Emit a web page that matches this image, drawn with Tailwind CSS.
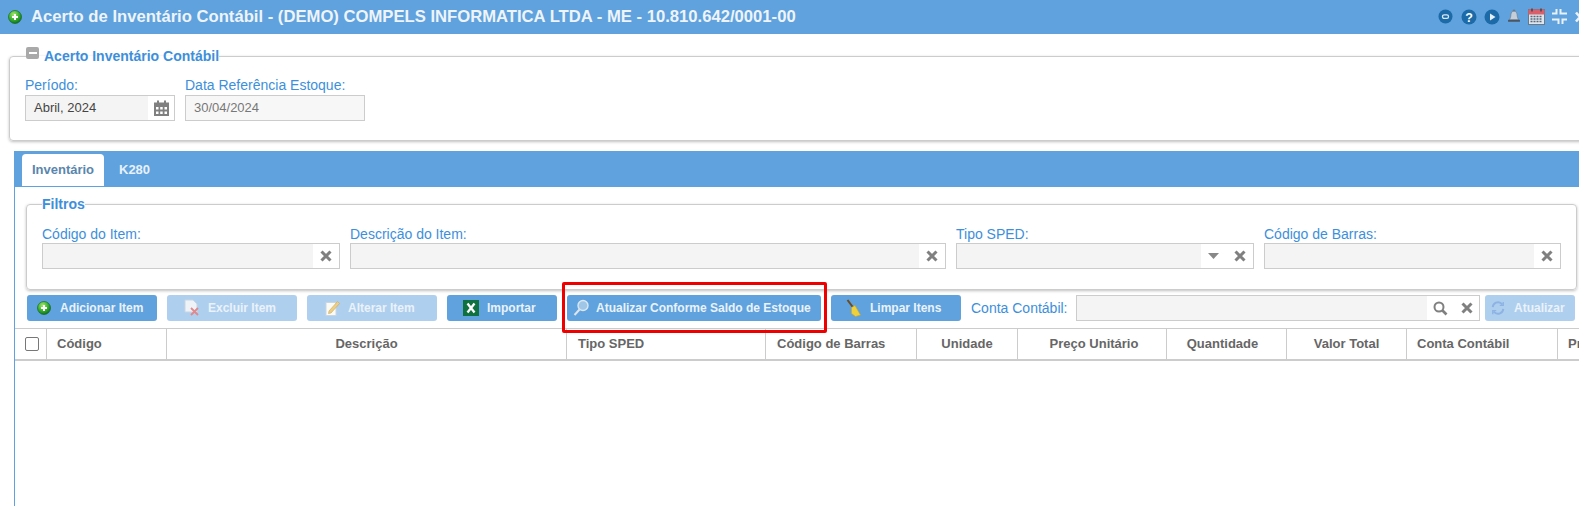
<!DOCTYPE html>
<html lang="pt-BR">
<head>
<meta charset="utf-8">
<title>Acerto de Inventário Contábil</title>
<script src="https://cdn.jsdelivr.net/npm/@tailwindcss/browser@4"></script>
</head>
<body class="h-[506px] w-[1579px] overflow-hidden bg-white font-['Liberation_Sans',Arial,sans-serif] text-[13px] text-[#555]">
<svg width="0" height="0" class="absolute">
  <defs>
    <radialGradient id="g" cx="40%" cy="30%" r="75%"><stop offset="0" stop-color="#a5e86c"/><stop offset=".55" stop-color="#38b02e"/><stop offset="1" stop-color="#0c6b1c"/></radialGradient>
  </defs>
</svg>

<header class="flex h-[34px] items-center justify-between bg-[#5fa2dd] pl-[8px] pr-0 overflow-hidden">
  <div class="flex items-center gap-[9px]">
    <svg width="14" height="14" viewBox="0 0 14 14"><circle cx="7" cy="7" r="6.5" fill="url(#g)" stroke="#0f5f1c" stroke-width=".6"/><path d="M7 4v6M4 7h6" stroke="#fff" stroke-width="2"/></svg>
    <h1 class="text-[16.65px] font-bold text-[#eef4fa] whitespace-nowrap">Acerto de Inventário Contábil - (DEMO) COMPELS INFORMATICA LTDA - ME - 10.810.642/0001-00</h1>
  </div>
  <div class="flex w-[141px] shrink-0 items-center gap-[6px] pb-[1px] overflow-hidden">
    <svg class="shrink-0" width="15" height="15" viewBox="0 0 15 15"><circle cx="7.5" cy="7.5" r="7" fill="#1c6aa8"/><rect x="4.5" y="5.8" width="6" height="3.6" rx="1.6" fill="none" stroke="#d9e8f5" stroke-width="1.3"/></svg>
    <svg class="ml-[2px] shrink-0" width="16" height="16" viewBox="0 0 16 16"><circle cx="8" cy="8" r="7.5" fill="#1c6aa8"/><text x="8" y="12.5" text-anchor="middle" font-size="12.5" font-weight="700" fill="#fff" font-family="Liberation Sans">?</text></svg>
    <svg class="ml-[1px] shrink-0" width="16" height="16" viewBox="0 0 16 16"><circle cx="8" cy="8" r="7.5" fill="#1c6aa8"/><path d="M6 4.5v7l5.500-3.500z" fill="#e4eff8"/></svg>
    <svg class="ml-[1px] shrink-0" width="14" height="15" viewBox="0 0 14 15"><circle cx="7" cy="1.800" r="1.300" fill="#6e7b89"/><path d="M7 2.200c-2 0-2.800 1.400-3 3.200-.2 2.400-.6 3.800-1.600 5.400h9.200c-1-1.600-1.400-3-1.600-5.400-.2-1.800-1-3.200-3-3.200z" fill="#c5ced8" stroke="#6e7b89" stroke-width=".6"/><rect x="1" y="10.800" width="12" height="2" rx=".5" fill="#4a5663"/></svg>
    <svg class="ml-[1px] shrink-0" width="17" height="17" viewBox="0 0 17 17"><rect x=".5" y="1.500" width="16" height="15" fill="#dfe5ec" stroke="#6c7886"/><rect x=".5" y="1.500" width="16" height="5" fill="#d9606b"/><path d="M4 .5v3M13 .5v3" stroke="#39424d" stroke-width="1.400"/><path d="M2.500 8.500h12M2.500 11h12M2.500 13.500h12" stroke="#56677a" stroke-width="1.300" stroke-dasharray="2 1"/></svg>
    <svg class="ml-[1px] shrink-0" width="15" height="15" viewBox="0 0 15 15"><path fill="#e9f1f9" d="M5.500 0v5.500H0v-2h3.500V0zM9.500 0v3.500H15v2H7.500V0zM0 9.500h7.500V15h-2v-3.500H0zM9.500 15V9.500H15v2h-3.500V15z"/></svg>
    <svg class="ml-[1px] shrink-0" width="12" height="14" viewBox="0 0 12 14"><path d="M2 2.500l8 9M10 2.500l-8 9" stroke="#e9f1f9" stroke-width="2.600"/></svg>
  </div>
</header>

<main>
  <fieldset class="ml-[9px] mt-[14px] h-[93px] w-[1600px] rounded-[4px] border border-[#ccc] px-[15px] shadow-[0_1px_3px_rgba(0,0,0,.25)]">
    <legend class="ml-[1px] flex h-[16px] items-center gap-[5px] text-[14px] font-bold leading-[16px] text-[#3d8fdb]">
      <span class="flex h-[12px] w-[13px] -translate-y-[3px] items-center justify-center rounded-[2px] bg-[#a9a9a9]"><span class="h-[2px] w-[8px] bg-white"></span></span>
      Acerto Inventário Contábil
    </legend>
    <div class="mt-[12px] flex gap-[10px]">
      <div class="w-[150px]">
        <label class="block h-[19px] text-[14px] leading-[18px] text-[#3d8fdb]">Período:</label>
        <div class="flex h-[26px] border border-[#ccc]">
          <div class="flex-1 bg-[#f4f4f4] pl-[8px] text-[13px] leading-[24px] text-[#444]">Abril, 2024</div>
          <div class="flex w-[26px] items-center justify-center bg-white">
            <svg width="15" height="16" viewBox="0 0 15 16" fill="#808080"><path d="M0 2.500h3V.5h2v2h5V.5h2v2h3V16H0z"/><g fill="#fff"><rect x="2" y="7" width="2.500" height="2.500"/><rect x="6.200" y="7" width="2.500" height="2.500"/><rect x="10.500" y="7" width="2.500" height="2.500"/><rect x="2" y="11.500" width="2.500" height="2.500"/><rect x="6.200" y="11.500" width="2.500" height="2.500"/><rect x="10.500" y="11.500" width="2.500" height="2.500"/></g></svg>
          </div>
        </div>
      </div>
      <div class="w-[180px]">
        <label class="block h-[19px] text-[14px] leading-[18px] text-[#3d8fdb]">Data Referência Estoque:</label>
        <div class="h-[26px] border border-[#ccc] bg-[#f7f7f7] pl-[8px] text-[13px] leading-[24px] text-[#777]">30/04/2024</div>
      </div>
    </div>
  </fieldset>

  <section class="ml-[14px] mt-[10px] h-[360px] w-[1600px] border-l border-[#5fa2dd]">
    <nav class="flex h-[36px] items-end bg-[#5fa2dd] pl-[7px]">
      <div class="mb-[1px] h-[32px] w-[82px] rounded-t-[4px] bg-white text-center text-[13px] font-bold leading-[31px] text-[#5a86ad]">Inventário</div>
      <div class="mb-[1px] ml-[15px] h-[32px] text-[13px] font-bold leading-[31px] text-[#e8f1fa]">K280</div>
    </nav>

    <fieldset class="ml-[11px] mt-[9px] h-[94px] w-[1551px] rounded-[4px] border border-[#ccc] px-[15px] shadow-[0_1px_3px_rgba(0,0,0,.25)]">
      <legend class="text-[14px] font-bold leading-[16px] text-[#3d8fdb]">Filtros</legend>
      <div class="mt-[13px] flex gap-[10px]">
        <div class="w-[298px]">
          <label class="block h-[18px] text-[14px] leading-[18px] text-[#3d8fdb]">Código do Item:</label>
          <div class="flex h-[26px] border border-[#ccc]"><div class="flex-1 bg-[#f4f4f4]"></div><div class="flex w-[26px] items-center justify-center bg-white"><svg width="12" height="12" viewBox="0 0 12 12"><path d="M1.500 1.500l9 9M10.500 1.500l-9 9" stroke="#808080" stroke-width="3"/></svg></div></div>
        </div>
        <div class="w-[596px]">
          <label class="block h-[18px] text-[14px] leading-[18px] text-[#3d8fdb]">Descrição do Item:</label>
          <div class="flex h-[26px] border border-[#ccc]"><div class="flex-1 bg-[#f4f4f4]"></div><div class="flex w-[26px] items-center justify-center bg-white"><svg width="12" height="12" viewBox="0 0 12 12"><path d="M1.500 1.500l9 9M10.500 1.500l-9 9" stroke="#808080" stroke-width="3"/></svg></div></div>
        </div>
        <div class="w-[298px]">
          <label class="block h-[18px] text-[14px] leading-[18px] text-[#3d8fdb]">Tipo SPED:</label>
          <div class="flex h-[26px] border border-[#ccc]"><div class="flex-1 bg-[#f4f4f4]"></div><div class="flex w-[52px] items-center justify-end gap-[15px] bg-white pr-[7px]"><svg width="11" height="6" viewBox="0 0 11 6"><path d="M0 0h11L5.500 6z" fill="#888"/></svg><svg width="12" height="12" viewBox="0 0 12 12"><path d="M1.500 1.500l9 9M10.500 1.500l-9 9" stroke="#808080" stroke-width="3"/></svg></div></div>
        </div>
        <div class="w-[297px]">
          <label class="block h-[18px] text-[14px] leading-[18px] text-[#3d8fdb]">Código de Barras:</label>
          <div class="flex h-[26px] border border-[#ccc]"><div class="flex-1 bg-[#f4f4f4]"></div><div class="flex w-[26px] items-center justify-center bg-white"><svg width="12" height="12" viewBox="0 0 12 12"><path d="M1.500 1.500l9 9M10.500 1.500l-9 9" stroke="#808080" stroke-width="3"/></svg></div></div>
        </div>
      </div>
    </fieldset>

    <div class="relative ml-[12px] mt-[5px] flex h-[26px] items-center text-[12px] font-bold text-[#eaf2fa]">
      <button class="flex h-[26px] w-[130px] items-center rounded-[3px] bg-[#5fa2dd] pl-[10px] font-bold">
        <svg width="14" height="14" viewBox="0 0 14 14"><circle cx="7" cy="7" r="6.500" fill="url(#g)" stroke="#0f5f1c" stroke-width=".6"/><path d="M7 4v6M4 7h6" stroke="#fff" stroke-width="2"/></svg>
        <span class="ml-[9px]">Adicionar Item</span>
      </button>
      <button class="ml-[10px] flex h-[26px] w-[130px] items-center rounded-[3px] bg-[#afcfee] pl-[17px] font-bold">
        <svg width="16" height="18" viewBox="0 0 16 18"><path d="M1 1h8l4 4v8H1z" fill="#eef3f8" stroke="#c9d5e2"/><path d="M7 9l7 7M14 9l-7 7" stroke="#e0888c" stroke-width="1.800"/></svg>
        <span class="ml-[8px]">Excluir Item</span>
      </button>
      <button class="ml-[10px] flex h-[26px] w-[130px] items-center rounded-[3px] bg-[#afcfee] pl-[18px] font-bold">
        <svg width="15" height="16" viewBox="0 0 15 16"><rect x="1" y="2.500" width="10" height="13" fill="#fbfbf6" stroke="#c9d5e2"/><path d="M4 11l8.500-9.500 2 2L6 13l-2.500.5z" fill="#edcf84" stroke="#c9a85f" stroke-width=".6"/></svg>
        <span class="ml-[8px]">Alterar Item</span>
      </button>
      <button class="ml-[10px] flex h-[26px] w-[110px] items-center rounded-[3px] bg-[#5fa2dd] pl-[16px] font-bold">
        <svg width="16" height="16" viewBox="0 0 16 16"><rect width="16" height="16" fill="#0f7140"/><path d="M4.500 3.500l7 9M11.500 3.500l-7 9" stroke="#fff" stroke-width="2.300"/></svg>
        <span class="ml-[8px]">Importar</span>
      </button>
      <button class="ml-[10px] flex h-[26px] w-[254px] items-center rounded-[3px] bg-[#5fa2dd] pl-[6px] font-bold">
        <svg width="16" height="18" viewBox="0 0 16 18"><circle cx="10" cy="6.500" r="5" fill="#9fc6e6" stroke="#dbe7f1" stroke-width="1.400"/><path d="M6.500 10.500L1.500 16" stroke="#dfe5ea" stroke-width="2"/></svg>
        <span class="ml-[7px]">Atualizar Conforme Saldo de Estoque</span>
      </button>
      <button class="ml-[10px] flex h-[26px] w-[130px] items-center rounded-[3px] bg-[#5fa2dd] pl-[15px] font-bold">
        <svg width="16" height="18" viewBox="0 0 16 18"><path d="M1.500 1l6 8" stroke="#6d4a1f" stroke-width="2"/><path d="M5.500 8.500l3.500-2 5.500 9.500-5 1.500-4-3z" fill="#efd13e" stroke="#c9a52a" stroke-width=".6"/></svg>
        <span class="ml-[8px]">Limpar Itens</span>
      </button>
      <label class="ml-[10px] w-[105px] text-[14px] font-normal text-[#3d8fdb]">Conta Contábil:</label>
      <div class="flex h-[26px] w-[404px] border border-[#ccc]">
        <div class="flex-1 bg-[#f4f4f4]"></div>
        <div class="flex w-[52px] items-center justify-end gap-[13px] bg-white pr-[6px]">
          <svg width="15" height="15" viewBox="0 0 15 15"><circle cx="6" cy="6" r="4.500" fill="none" stroke="#808080" stroke-width="2"/><path d="M9.500 9.500l4 4" stroke="#808080" stroke-width="2.600"/></svg>
          <svg width="12" height="12" viewBox="0 0 12 12"><path d="M1.500 1.500l9 9M10.500 1.500l-9 9" stroke="#808080" stroke-width="3"/></svg>
        </div>
      </div>
      <button class="ml-[5px] flex h-[26px] w-[90px] items-center rounded-[3px] bg-[#afcfee] pl-[6px] font-bold">
        <svg width="14" height="16" viewBox="0 0 16 18" fill="none" stroke="#8db3e4" stroke-width="2.200"><path d="M2 8a6 6 0 0 1 10-4l1 1M14 10a6 6 0 0 1-10 4l-1-1"/><path d="M14 2v4h-4M2 16v-4h4" stroke-width="1.500"/></svg>
        <span class="ml-[9px]">Atualizar</span>
      </button>
      <div class="absolute left-[535px] top-[-13px] h-[51px] w-[265px] rounded-[2px] border-[3.5px] border-[#ee0000]"></div>
    </div>

    <div class="mt-[7px] flex h-[33px] border-y border-[#ccc] border-b-2 text-[13px] font-bold text-[#666]">
      <div class="flex w-[32px] items-center justify-center border-r border-[#ccc] pl-[3px]"><span class="h-[14px] w-[14px] rounded-[2px] border border-[#777] bg-white"></span></div>
      <div class="flex w-[120px] items-center border-r border-[#ccc] pl-[10px]">Código</div>
      <div class="flex w-[400px] items-center justify-center border-r border-[#ccc]">Descrição</div>
      <div class="flex w-[199px] items-center border-r border-[#ccc] pl-[11px]">Tipo SPED</div>
      <div class="flex w-[151px] items-center border-r border-[#ccc] pl-[11px]">Código de Barras</div>
      <div class="flex w-[101px] items-center justify-center border-r border-[#ccc]">Unidade</div>
      <div class="flex w-[149px] items-center justify-center border-r border-[#ccc] pl-[4px]">Preço Unitário</div>
      <div class="flex w-[120px] items-center justify-center border-r border-[#ccc] pr-[8px]">Quantidade</div>
      <div class="flex w-[120px] items-center justify-center border-r border-[#ccc]">Valor Total</div>
      <div class="flex w-[151px] items-center border-r border-[#ccc] pl-[10px]">Conta Contábil</div>
      <div class="flex items-center pl-[10px] whitespace-nowrap">Pr</div>
    </div>
  </section>
</main>
</body>
</html>
